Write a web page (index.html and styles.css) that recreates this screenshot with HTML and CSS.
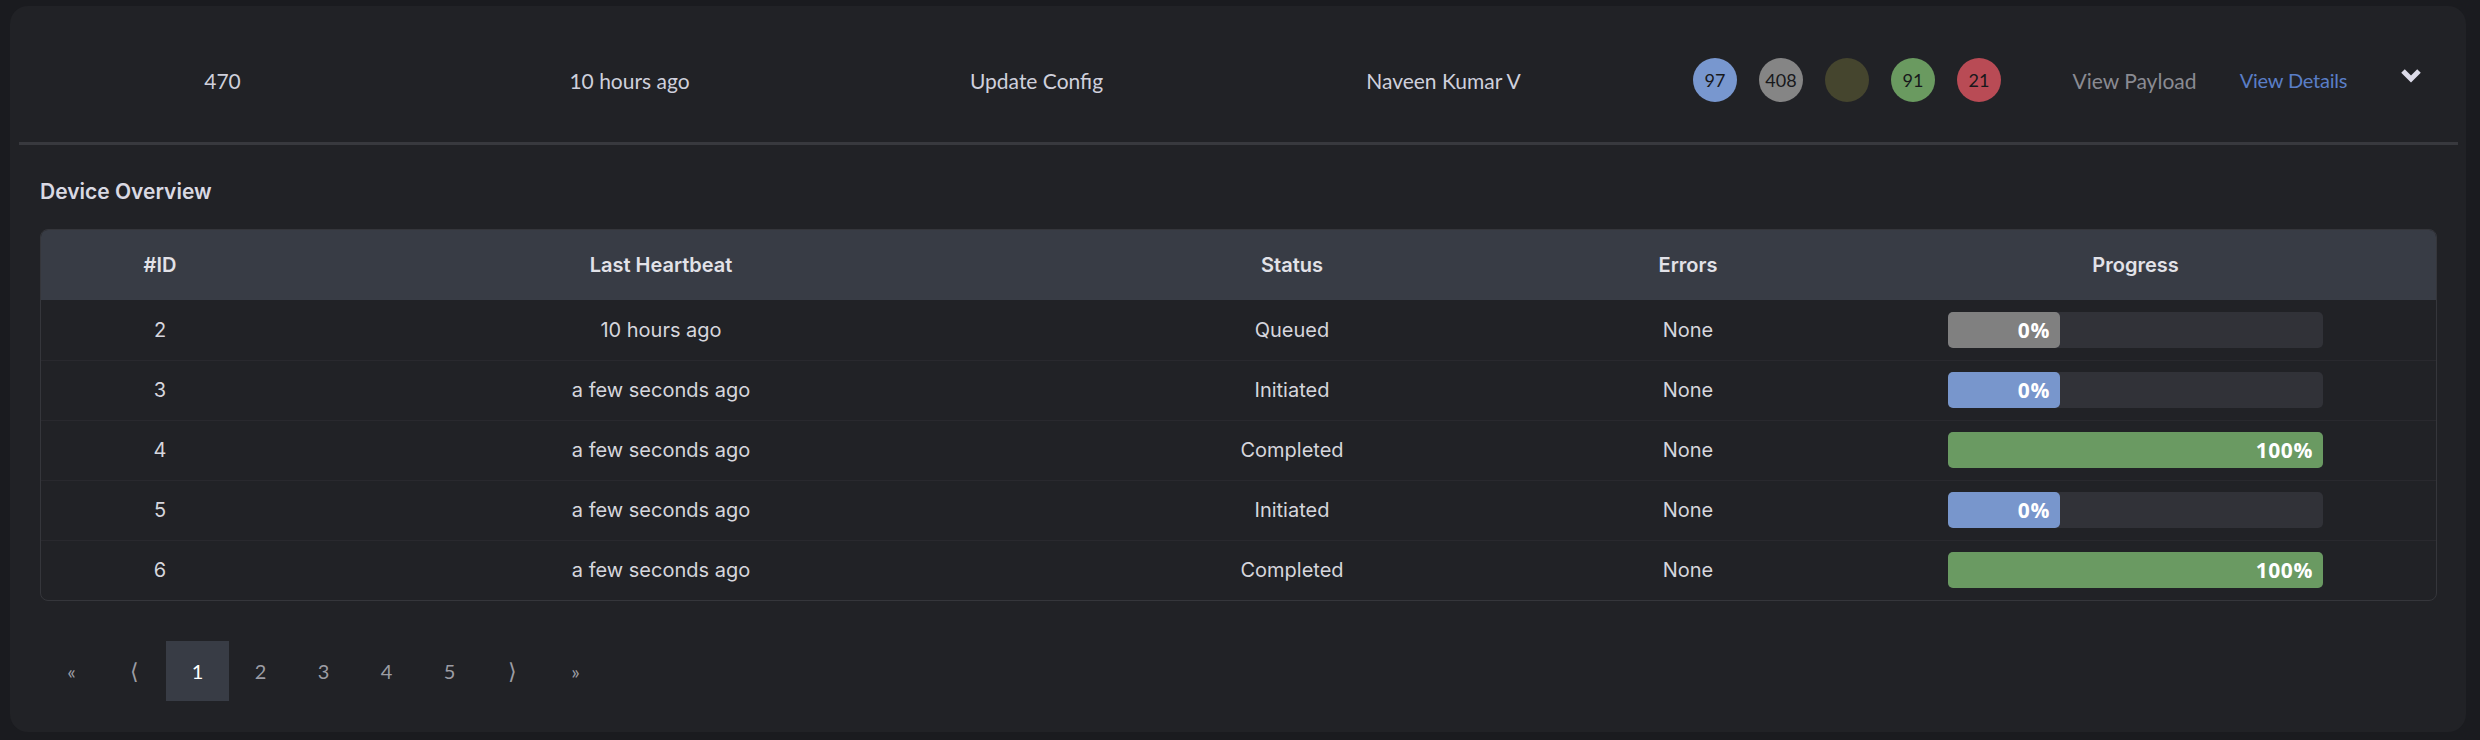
FILE: index.html
```html
<!DOCTYPE html>
<html lang="en">
<head>
<meta charset="utf-8">
<title>Device Overview</title>
<link rel="stylesheet" href="styles.css">
</head>
<body>
<div class="card">
  <div class="summary">
    <div class="cell">470</div>
    <div class="cell">10 hours ago</div>
    <div class="cell">Update Config</div>
    <div class="cell">Naveen Kumar V</div>
    <div class="badges">
      <span class="badge blue">97</span>
      <span class="badge gray">408</span>
      <span class="badge olive"></span>
      <span class="badge green">91</span>
      <span class="badge red">21</span>
    </div>
    <a class="link muted">View Payload</a>
    <a class="link primary">View Details</a>
    <div class="toggle">
      <svg width="22" height="15" viewBox="0 0 22 15"><polyline points="3,3 11,11 19,3" fill="none" stroke="#dcdbe8" stroke-width="5" stroke-linejoin="miter" stroke-linecap="butt"/></svg>
    </div>
  </div>
  <div class="details">
    <h3 class="section-title">Device Overview</h3>
    <div class="table-wrap">
      <table class="devices">
        <colgroup>
          <col class="c-id"><col class="c-hb"><col class="c-status"><col class="c-err"><col class="c-prog">
        </colgroup>
        <thead>
          <tr><th>#ID</th><th>Last Heartbeat</th><th>Status</th><th>Errors</th><th>Progress</th></tr>
        </thead>
        <tbody>
          <tr><td>2</td><td>10 hours ago</td><td>Queued</td><td>None</td><td><div class="bar"><div class="fill gray" style="width:0%">0%</div></div></td></tr>
          <tr><td>3</td><td>a few seconds ago</td><td>Initiated</td><td>None</td><td><div class="bar"><div class="fill blue" style="width:0%">0%</div></div></td></tr>
          <tr><td>4</td><td>a few seconds ago</td><td>Completed</td><td>None</td><td><div class="bar"><div class="fill green" style="width:100%">100%</div></div></td></tr>
          <tr><td>5</td><td>a few seconds ago</td><td>Initiated</td><td>None</td><td><div class="bar"><div class="fill blue" style="width:0%">0%</div></div></td></tr>
          <tr><td>6</td><td>a few seconds ago</td><td>Completed</td><td>None</td><td><div class="bar"><div class="fill green" style="width:100%">100%</div></div></td></tr>
        </tbody>
      </table>
    </div>
    <nav class="pager">
      <span class="page small">«</span>
      <span class="page arrow">⟨</span>
      <span class="page active">1</span>
      <span class="page">2</span>
      <span class="page">3</span>
      <span class="page">4</span>
      <span class="page">5</span>
      <span class="page arrow">⟩</span>
      <span class="page small">»</span>
    </nav>
  </div>
</div>
</body>
</html>
```
FILE: styles.css
```css
* { box-sizing: border-box; }
html, body { margin: 0; padding: 0; }
body {
  background: #1a1b1f;
  font-family: "Lato", "Liberation Sans", sans-serif;
  width: 2480px;
  height: 740px;
  overflow: hidden;
}
.card {
  margin: 6px 14px 8px 10px;
  background: #212226;
  border-radius: 18px;
  padding: 0 8px 31px 9px;
}
.summary {
  display: flex;
  align-items: center;
  padding-top: 12px;
  height: 139px;
  border-bottom: 3px solid #38393e;
  color: #cfd0dc;
  font-size: 21px;
}
.cell {
  width: 407px;
  flex: none;
  text-align: center;
}
.badges {
  width: 407px;
  flex: none;
  display: flex;
  gap: 22px;
  padding-left: 46px;
}
.badge {
  width: 44px;
  height: 44px;
  border-radius: 50%;
  display: flex;
  align-items: center;
  justify-content: center;
  font-size: 18px;
  color: #17181b;
}
.badge.blue { background: #7897cf; }
.badge.gray { background: #858585; }
.badge.olive { background: #45452e; }
.badge.green { background: #6a9a60; }
.badge.red { background: #b94b55; }
.link {
  width: 159px;
  flex: none;
  text-align: center;
  font-size: 21px;
  padding-left: 2px;
}
.link.muted { color: #8a8b92; }
.link.primary { color: #5a7ec6; font-size: 20px; letter-spacing: -0.2px; }
.toggle {
  width: 78px;
  flex: none;
  display: flex;
  justify-content: center;
  padding-bottom: 10px;
}
.toggle svg { display: block; }
.details {
  padding: 0 21px;
}
.section-title {
  margin: 32px 0 22px;
  font-family: "Inter", "Liberation Sans", sans-serif;
  font-weight: 600;
  font-size: 21px;
  line-height: 30px;
  color: #d9d9e3;
}
.table-wrap {
  border: 1px solid #35363b;
  border-radius: 8px;
  overflow: hidden;
}
.devices {
  width: 100%;
  border-collapse: collapse;
  table-layout: fixed;
  font-family: "Inter", "Liberation Sans", sans-serif;
  font-size: 20px;
  color: #d6d6dd;
}
.c-id { width: 238px; }
.c-hb { width: 764px; }
.c-status { width: 498px; }
.c-err { width: 294px; }
.c-prog { width: 601px; }
.devices th {
  background: #383c45;
  height: 70px;
  padding: 0;
  font-weight: 600;
  color: #e2e2e8;
  text-align: center;
}
.devices td {
  height: 60px;
  padding: 0;
  text-align: center;
  border-top: 1px solid #29292e;
}
.devices tbody tr:first-child td { border-top: none; height: 60px; }
.bar {
  width: 375px;
  height: 36px;
  margin: 0 auto;
  background: #313238;
  border-radius: 5px;
  display: flex;
}
.fill {
  min-width: 112px;
  height: 36px;
  border-radius: 5px;
  color: #fff;
  font-family: "Open Sans", "Noto Sans", sans-serif;
  font-weight: 700;
  font-size: 21px;
  letter-spacing: 0.6px;
  line-height: 36px;
  text-align: right;
  padding-right: 10px;
}
.fill.gray { background: #808080; }
.fill.blue { background: #7896cc; }
.fill.green { background: #6a9a62; }
.pager {
  margin-top: 40px;
  display: flex;
  height: 60px;
}
.page {
  width: 63px;
  height: 60px;
  display: flex;
  align-items: center;
  justify-content: center;
  color: #9c9da4;
  font-size: 20px;
}
.page.small { font-size: 20px; }
.page.arrow {
  font-family: "DejaVu Sans", sans-serif;
  font-weight: 200;
  font-size: 22px;
}
.page.active {
  background: #383c45;
  color: #ffffff;
}
```
